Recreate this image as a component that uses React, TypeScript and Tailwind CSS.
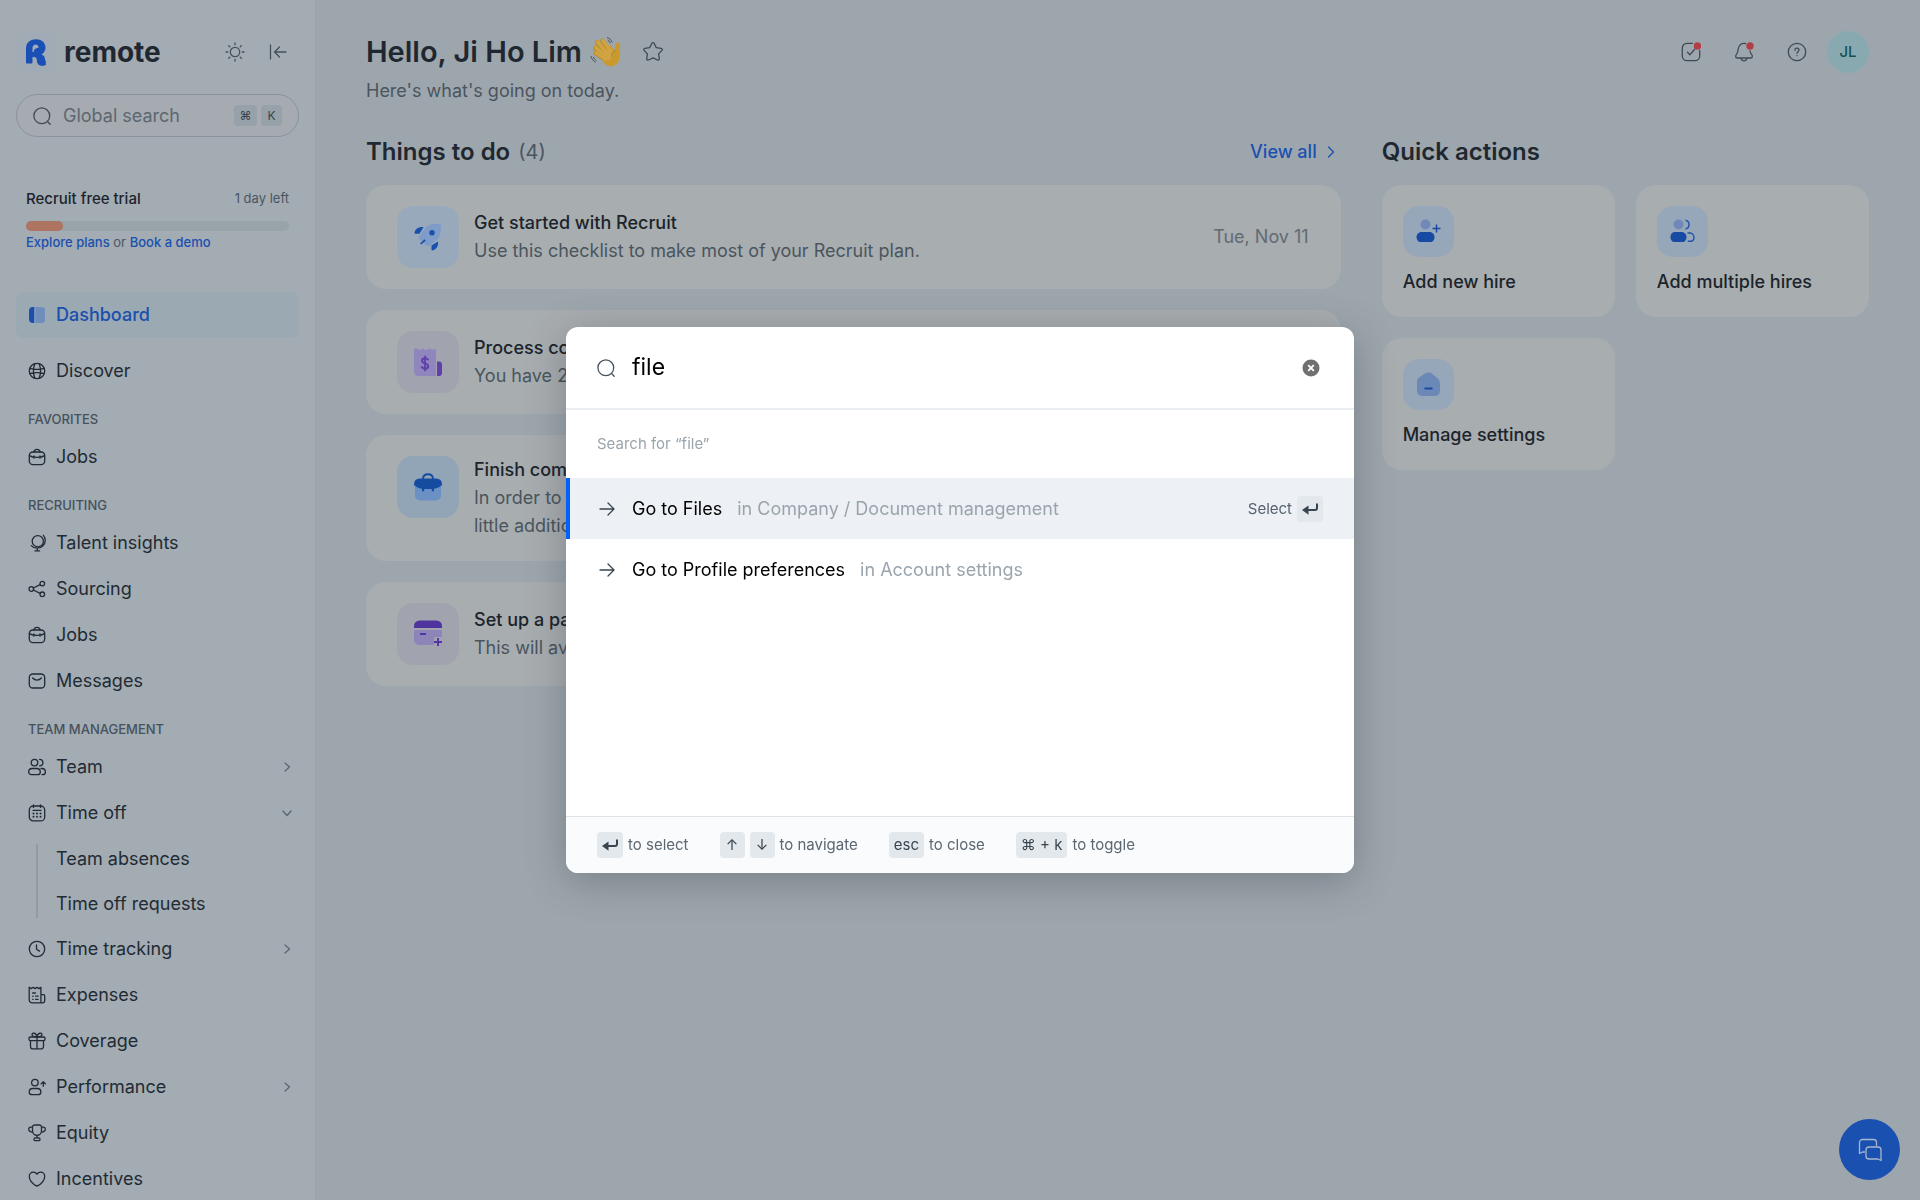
import React, { useState } from 'react';

type IconProps = { children: React.ReactNode; className?: string; box?: string };

const Icon = ({ children, className = 'size-[18px]', box = '0 0 18 18' }: IconProps) => (
  <svg
    viewBox={box}
    className={`shrink-0 ${className}`}
    fill="none"
    stroke="currentColor"
    strokeWidth="1.3"
    strokeLinecap="round"
    strokeLinejoin="round"
    aria-hidden="true"
  >
    {children}
  </svg>
);

const icons = {
  dashboard: (
    <>
      <path d="M6.3 1v16H5a4 4 0 0 1-4-4V5a4 4 0 0 1 4-4z" fill="currentColor" stroke="none" />
      <path d="M7.3 1H14a3 3 0 0 1 3 3v10a3 3 0 0 1-3 3H7.3z" fill="#6f8ebb" stroke="none" />
    </>
  ),
  globe: (
    <>
      <circle cx="9" cy="9" r="7.7" />
      <path d="M6.8 1.8C5.2 6 5.2 12 6.8 16.2M11.2 1.8c1.6 4.2 1.6 10.2 0 14.4M1.8 6.3c4 1.2 10.4 1.2 14.4 0M1.8 11.7c4-1.2 10.4-1.2 14.4 0" />
    </>
  ),
  bag: (
    <>
      <rect x="1.3" y="4" width="15.4" height="12.7" rx="3.6" />
      <path d="M5.8 4C6.2 2.4 7.4 1.3 9 1.3s2.8 1.1 3.2 2.7M1.5 7.6c2 1.4 4.2 1.8 7.5 1.8s5.5-.4 7.5-1.8M6 8v2.2M12 8v2.2" />
    </>
  ),
  insights: (
    <>
      <circle cx="9.8" cy="7.2" r="5.6" />
      <path d="M3.2 11.6c3.200 3.400 8.600 3.500 11.800.1 2.900-3 2.900-7.500.4-10.400M9.300 14.400v2.300M7 16.900h4.600" />
    </>
  ),
  share: (
    <>
      <circle cx="3.3" cy="9" r="2.3" />
      <circle cx="14.3" cy="3.6" r="2.3" />
      <circle cx="14.3" cy="14.3" r="2.3" />
      <path d="M5.4 8l6.7-3.3M5.4 10l6.7 3.3" />
    </>
  ),
  mail: (
    <>
      <rect x="1.3" y="2" width="15.4" height="14" rx="3.6" />
      <path d="M4.6 6c2.5 2.7 6.3 2.7 8.8 0" />
    </>
  ),
  team: (
    <>
      <circle cx="6.5" cy="4.6" r="3.3" />
      <path d="M11.6 1.3a3.3 3.3 0 0 1 0 6.6" />
      <path d="M.7 13.9a3.5 3.5 0 0 1 3.5-3.4h4.6a3.5 3.5 0 0 1 3.5 3.400c0 1.500-1.100 2.700-2.700 2.700H3.400C1.800 16.600.7 15.400.7 13.900zM13 10.500h.9a3.500 3.500 0 0 1 3.500 3.400c0 1.500-1.100 2.700-2.700 2.700h-.8" />
    </>
  ),
  calendar: (
    <>
      <rect x="1.3" y="2" width="15.4" height="14.9" rx="4" />
      <path d="M5.5.9v2.500M12.500.9v2.500M5 6.300h8" />
      <path d="M5.500 9.600h.01M9 9.600h.01M12.500 9.600h.01M5.500 12.800h.01M9 12.800h.01M12.500 12.800h.01" strokeWidth="2" />
    </>
  ),
  clock: (
    <>
      <circle cx="9" cy="9" r="7.7" />
      <path d="M8.5 4.800v4.400l3 1.900" />
    </>
  ),
  receipt: (
    <>
      <path d="M12.9 8.200V1.300L11 2.600 9 1.300 7.100 2.600 5.200 1.300 3.300 2.600 1.200 1.300v12.500a3 3 0 0 0 3 3h10.300a2.200 2.200 0 0 0 2.200-2.200V10a1.300 1.300 0 0 0-1.300-1.300h-1.300a1.200 1.200 0 0 0-1.200 1.200v6.900" />
      <path d="M4.700 7h2.700M4.700 10.200h.5M7.600 10.200h2.500M4.700 13.300h.5M7.600 13.300h2.500" />
    </>
  ),
  gift: (
    <>
      <rect x="1" y="5" width="16" height="3.6" rx="1.3" />
      <path d="M2.500 8.600v5.800a2.500 2.500 0 0 0 2.500 2.500h8a2.500 2.500 0 0 0 2.500-2.500V8.600M9 5v11.900M9 5C5.400 5 4 3.800 4 2.600 4 .5 8.400.3 9 5zM9 5c3.600 0 5-1.200 5-2.400C14 .5 9.600.3 9 5z" />
    </>
  ),
  performance: (
    <>
      <circle cx="6.9" cy="4.6" r="3.3" />
      <path d="M1.200 13.900a3.500 3.500 0 0 1 3.500-3.400h4.700a3.500 3.500 0 0 1 3.500 3.400c0 1.500-1.100 2.700-2.700 2.700H3.900c-1.600 0-2.700-1.200-2.700-2.700zM15.300 8.300V4M13.100 5.900l2.200-2.100 2.200 2.100" />
    </>
  ),
  trophy: (
    <>
      <path d="M4.500 2.900a2 2 0 0 1 2-1.900h5a2 2 0 0 1 2 1.900v3.900a4.500 4.500 0 0 1-9 0zM4.500 3.100H2.700C1.500 3.100.7 4 .7 5.200c0 1.900 1.800 3 4 2.900M13.500 3.100h1.800c1.200 0 2 .9 2 2.100 0 1.900-1.800 3-4 2.900M9 11.300v2.600" />
      <rect x="6" y="13.9" width="6" height="2.8" rx="1.3" />
    </>
  ),
  heart: (
    <path d="M9 16.200C4.900 14.200 1.300 10.700 1.300 6.600 1.300 4.100 3 2.200 5.300 2.200c1.500 0 2.900.8 3.700 2 .8-1.200 2.200-2 3.700-2 2.300 0 4 1.900 4 4.400 0 4.100-3.600 7.600-7.700 9.600z" />
  ),
  search: (
    <>
      <circle cx="8.800" cy="8.800" r="7.900" />
      <path d="M14.500 14.500l2.700 2.700" />
    </>
  ),
};

const ArrowRight = () => (
  <Icon>
    <path d="M2 9h13.500M10 3l6 6-6 6" />
  </Icon>
);

const EnterKey = () => (
  <svg viewBox="0 0 18 18" className="size-[18px]" fill="none" stroke="currentColor" strokeWidth="2" aria-hidden="true">
    <path d="M16 3.500v4.600a2 2 0 0 1-2 2H6" />
    <path d="M7.500 5.500v9.200L1 10.100z" fill="currentColor" stroke="none" />
  </svg>
);

const Wave = () => (
  <svg viewBox="0 0 32 32" className="size-8 shrink-0" fill="none" role="img" aria-label="Waving hand">
    <g stroke="#b98d22" strokeLinecap="round">
      <path d="M16.500 21.500 5.500 12" strokeWidth="4.600" />
      <path d="M17 18 7 6.500" strokeWidth="4.600" />
      <path d="M20 16 12.500 4.800" strokeWidth="4.600" />
      <path d="M14 23 5.500 17" strokeWidth="4.200" />
    </g>
    <path
      d="M11 21l9-12c2 2.500 3.800 4.300 5 5.500.6-2.500.3-4.500.8-6.300.5-1.700 3-2 3.900-.2.600 1.200.2 3.500.3 7 .1 5.500-.3 10.200-3.800 13.200-4 3.300-8.300 2.500-11.700-.6z"
      fill="#c99a2b"
    />
    <g stroke="#d0a443" strokeLinecap="round">
      <path d="M17 21 6 11.800" strokeWidth="3.500" />
      <path d="M18 18 7.500 6.200" strokeWidth="3.500" />
      <path d="M21 16 13 4.800" strokeWidth="3.500" />
      <path d="M15 23 6 16.800" strokeWidth="3.200" />
    </g>
    <path d="M13 20l8-8c2 2 4 4.500 3 7s-4 6-7 6z" fill="#d0a443" />
    <path d="M25 14.700c-2.300 1.300-3.400 3.500-2.900 6" stroke="#a77a1c" strokeLinecap="round" />
    <path d="M17.500 1.500c2 .8 3.600 2.300 4.500 4.500M18 4.300c1 .5 1.800 1.300 2.300 2.400M1 20.500c.7 2.500 2.200 4.400 4.500 5.600M3.500 21.300c.5 1.200 1.300 2.200 2.500 2.900" stroke="#48525b" strokeLinecap="round" />
  </svg>
);

type NavEntry = { label: string; icon: React.ReactNode; open?: boolean; closed?: boolean };

const NavRow = ({ label, icon, open, closed }: NavEntry) => (
  <a href="#" className="flex h-[46px] items-center pr-1.5 pl-3 text-lg">
    <Icon>{icon}</Icon>
    <span className="ml-2.5 flex-1">{label}</span>
    {closed && (
      <Icon className="size-3 text-[#5b666f]" box="0 0 12 12">
        <path d="M4 2l4.500 4L4 10" />
      </Icon>
    )}
    {open && (
      <Icon className="size-3 text-[#5b666f]" box="0 0 12 12">
        <path d="M2 4l4 4.500L10 4" />
      </Icon>
    )}
  </a>
);

const NavHeading = ({ children }: { children: React.ReactNode }) => (
  <h3 className="flex h-10 items-center px-3 pt-3 text-[13px] font-medium tracking-normal text-[#46525c] uppercase">{children}</h3>
);

const recruiting: NavEntry[] = [
  { label: 'Talent insights', icon: icons.insights },
  { label: 'Sourcing', icon: icons.share },
  { label: 'Jobs', icon: icons.bag },
  { label: 'Messages', icon: icons.mail },
];

const management: NavEntry[] = [
  { label: 'Time tracking', icon: icons.clock, closed: true },
  { label: 'Expenses', icon: icons.receipt },
  { label: 'Coverage', icon: icons.gift },
  { label: 'Performance', icon: icons.performance, closed: true },
  { label: 'Equity', icon: icons.trophy },
  { label: 'Incentives', icon: icons.heart },
];

const Sidebar = () => (
  <aside className="h-full w-[316px] shrink-0 overflow-hidden border-r border-[#9ba3ab] bg-[#a3abb3] px-4 pt-8">
    <div className="flex h-10 items-center">
      <div className="flex size-10 items-center justify-center rounded-xl bg-[#a0abb5]">
        <svg viewBox="0 0 20 27" className="h-[27px] w-5" fill="#1a50b5" role="img" aria-label="Remote logo">
          <path d="M0 23V9.500C0 3.800 4 .3 9.800.3c5.700 0 9.700 3.400 9.700 8.200 0 3.100-1.500 5.500-4.100 6.900 2.500.8 3.600 2.400 3.600 4.900 0 .9.2 1.200.8 1.200V26c-.7.5-2 .8-3.300.8-3.500 0-5.600-2-5.600-5.300 0-2.300-1-3.600-2.900-3.600H6.500v5.300c0 .9-.3 1.300-1.200 1.300H1.200C.3 24.500 0 24 0 23zM6.500 12.900h1.200c.1-2.400 1.600-3.900 4.800-4.100V8c-.2-1.700-1.200-2.600-2.800-2.600-2 0-3.200 1.300-3.200 3.700z" />
        </svg>
      </div>
      <span className="ml-2 flex-1 text-[28px] leading-10 font-bold text-[#1f2830]">remote</span>
      <button type="button" aria-label="Toggle theme" className="mr-6 text-[#46515a]">
        <Icon className="size-5" box="0 0 20 20">
          <circle cx="10" cy="10" r="4.7" />
          <path d="M10 1v1.700M10 17.300V19M1 10h1.700M17.300 10H19M3.700 3.700l1.100 1.100M15.200 15.200l1.100 1.100M3.700 16.300l1.100-1.100M15.200 4.800l1.100-1.100" />
        </Icon>
      </button>
      <button type="button" aria-label="Collapse sidebar" className="mr-3 text-[#46515a]">
        <Icon>
          <path d="M1.500 2v14M6 9h11M10.500 4l-5 5 5 5" />
        </Icon>
      </button>
    </div>

    <label className="mt-[22px] flex h-[43px] items-center rounded-full border border-[#8a939c] bg-[#a5abb0] px-4">
      <span className="text-[#3f4a53]">
        <Icon>{icons.search}</Icon>
      </span>
      <input
        type="text"
        aria-label="Global search"
        placeholder="Global search"
        className="ml-3 w-0 flex-1 bg-transparent text-lg outline-none placeholder:text-[#5c6770]"
      />
      <kbd className="flex h-[21px] w-[23px] items-center justify-center rounded-sm bg-[#97a1a9] font-['Inter',sans-serif] text-xs text-[#38434c]">⌘</kbd>
      <kbd className="ml-1 flex h-[21px] w-[21px] items-center justify-center rounded-sm bg-[#97a1a9] font-['Inter',sans-serif] text-xs text-[#38434c]">K</kbd>
    </label>

    <section className="mt-[52px] h-[103px] px-2.5">
      <div className="flex h-5 items-center justify-between">
        <h2 className="text-[15px] font-medium text-[#1c242b]">Recruit free trial</h2>
        <span className="text-[13px] text-[#4b5660]">1 day left</span>
      </div>
      <div className="mt-3 h-2.5 rounded-full bg-[#98a3aa]">
        <div className="h-full w-[14%] rounded-full bg-[#ad7462]" />
      </div>
      <p className="mt-px text-[13px] leading-5 text-[#4b5660]">
        <a href="#" className="font-medium text-[#1a50b0]">Explore plans</a> or{' '}
        <a href="#" className="font-medium text-[#1a50b0]">Book a demo</a>
      </p>
    </section>

    <nav className="text-[#222b33]">
      <div className="mb-2.5 rounded-lg bg-[#9ba9b3] font-medium text-[#1a4fae]">
        <NavRow label="Dashboard" icon={icons.dashboard} />
      </div>
      <NavRow label="Discover" icon={icons.globe} />
      <NavHeading>Favorites</NavHeading>
      <NavRow label="Jobs" icon={icons.bag} />
      <NavHeading>Recruiting</NavHeading>
      {recruiting.map((item) => (
        <NavRow key={item.label} {...item} />
      ))}
      <NavHeading>Team management</NavHeading>
      <NavRow label="Team" icon={icons.team} closed />
      <NavRow label="Time off" icon={icons.calendar} open />
      <div className="flex">
        <div className="my-2 ml-5 w-[2px] bg-[#929aa2]" />
        <div className="ml-[18px] flex-1 text-lg">
          <a href="#" className="flex h-[45px] items-center">Team absences</a>
          <a href="#" className="flex h-[45px] items-center">Time off requests</a>
        </div>
      </div>
      {management.map((item) => (
        <NavRow key={item.label} {...item} />
      ))}
    </nav>
  </aside>
);

const rocket = (
  <>
    <path d="M12.500 4C14.500 2 17 1.200 20 1l5.500-.2c1.300 0 1.700.5 1.600 1.700L26.500 9c-.3 3-1.200 5.400-3.200 7.400l-6.700 5.600c-1.300 1.200-3 1.300-4.300.2l-6.500-5.400c-1.200-1.300-1.200-2.900-.1-4.300z" fill="#7f9bc7" />
    <path d="M9.500 4.200c-5-.7-8.200 2-9 5.400-.1.700.2 1.100.9 1.100h4.100zM24 18.500c.7 5-2 8.200-5.400 9-.7.1-1.100-.2-1.100-.9v-4zM6 20.500l4.500-4.200 1.300 1.200L7.300 21.600z" fill="#1a50ae" />
    <circle cx="18" cy="9.800" r="2.700" fill="#1a50ae" />
  </>
);

const invoice = (
  <>
    <path d="M0 1.500 1.500 0l3.800 2L9 .5 11.500 2l4-1.500L19 2l3-1.500v28H5a5 5 0 0 1-5-5z" fill="#8f86bd" />
    <path d="M25 13.500c2 0 3 1.500 3 3V25c0 2.500-2 3.500-5 3.500V13.500z" fill="#5e3fac" />
    <path d="M14 11.500c-.8-1-1.800-1.300-3-1.300-1.700 0-3 .9-3 2.500 0 3.400 6.300 1.800 6.300 5.200 0 1.700-1.400 2.700-3.200 2.700-1.400 0-2.500-.5-3.300-1.500M11.100 8.500v14" fill="none" stroke="#5e3fac" strokeWidth="1.900" strokeLinecap="round" />
  </>
);

const briefcase = (
  <>
    <path d="M1 11h26v11.500a5 5 0 0 1-5 5H6a5 5 0 0 1-5-5z" fill="#6b90c4" />
    <path d="M0 11a5.500 5.500 0 0 1 5.500-5.500h17A5.500 5.500 0 0 1 28 11v1c-1.800 2-5 3.200-8 3.700v2.600h-2.200v-2.300h-7.600v2.300H8v-2.600c-3-.5-6.200-1.700-8-3.700z" fill="#164c9f" />
    <path d="M9 6c0-3 2-4.700 5-4.700s5 1.700 5 4.700" fill="none" stroke="#164c9f" strokeWidth="1.900" />
  </>
);

const card = (
  <>
    <path d="M0 10h28v7h-8v8H5a5 5 0 0 1-5-5z" fill="#8d85b7" />
    <path d="M0 8V6a5.500 5.500 0 0 1 5.500-5.500h17A5.500 5.500 0 0 1 28 6v2z" fill="#4f34a0" />
    <path d="M6 14h6M24 18v8M20 22h8" fill="none" stroke="#5235a4" strokeWidth="1.900" />
  </>
);

type Task = { title: string; text: string; more?: string; date?: string; tile: string; art: React.ReactNode };

const tasks: Task[] = [
  { title: 'Get started with Recruit', text: 'Use this checklist to make most of your Recruit plan.', date: 'Tue, Nov 11', tile: 'bg-[#98a9bb]', art: rocket },
  { title: 'Process co', text: 'You have 2', tile: 'bg-[#a1a4ae]', art: invoice },
  { title: 'Finish com', text: 'In order to', more: 'little additio', tile: 'bg-[#92a5b6]', art: briefcase },
  { title: 'Set up a pa', text: 'This will ave', tile: 'bg-[#a1a4ae]', art: card },
];

const TaskCard = ({ title, text, more, date, tile, art }: Task) => (
  <li className={`flex rounded-[20px] bg-[#a8adb0] py-[21px] pr-8 pl-[31px] ${more ? 'items-start' : 'items-center'}`}>
    <div className={`flex size-[62px] shrink-0 items-center justify-center rounded-2xl ${tile}`}>
      <svg viewBox="0 0 28 28" className="size-7" aria-hidden="true">{art}</svg>
    </div>
    <div className="ml-[15px] flex-1 text-lg leading-7">
      <h3 className="font-medium text-[#1c242b]">{title}</h3>
      <p className="text-[#4a555e]">{text}</p>
      {more && <p className="text-[#4a555e]">{more}</p>}
    </div>
    {date && <time className="text-lg text-[#616b73]">{date}</time>}
  </li>
);

const quickActions = [
  {
    label: 'Add new hire',
    art: (
      <>
        <circle cx="9.5" cy="5.5" r="5" fill="#7089b8" />
        <path d="M5.500 13h8c3 0 5 2.300 5 5.200 0 2.600-1.700 4.800-4 4.800h-10c-2.300 0-4-2.200-4-4.800C.5 15.300 2.500 13 5.500 13z" fill="#164aa3" />
        <path d="M20.500 5.500v8M16.500 9.500h8" stroke="#164aa3" strokeWidth="1.500" />
      </>
    ),
  },
  {
    label: 'Add multiple hires',
    art: (
      <>
        <circle cx="8.5" cy="5.5" r="5" fill="#7089b8" />
        <path d="M5 13h6.500c3 0 5 2.300 5 5.200 0 2.600-1.500 4.800-3.700 4.800H4.200C2 23 .5 20.800.5 18.200.5 15.300 2 13 5 13z" fill="#164aa3" />
        <path d="M15.500 1.200a4.500 4.500 0 0 1 0 8.800M17.500 14h2c2.500 0 4.500 1.800 4.500 4.300 0 2.300-1.500 4-3.500 4h-2.800" fill="none" stroke="#2256ac" strokeWidth="1.500" />
      </>
    ),
  },
  {
    label: 'Manage settings',
    art: (
      <>
        <path d="M9.600 1.300c1.700-1.200 4.100-1.200 5.800 0l5 4C22.700 7 24 9 24 12v7a5 5 0 0 1-5 5H6a5 5 0 0 1-5-5V9.500c0-2 .7-3 2-4z" fill="#6b88b6" />
        <path d="M8.500 16.500h8" stroke="#164aa3" strokeWidth="2" />
      </>
    ),
  },
];

const HeaderIcons = () => (
  <div className="flex items-center text-[#3f4a53]">
    <button type="button" aria-label="Tasks">
      <Icon className="size-5" box="0 0 20 20">
        <path d="M11.500 1.300H6a4.700 4.700 0 0 0-4.700 4.700v8A4.700 4.700 0 0 0 6 18.700h8a4.700 4.700 0 0 0 4.700-4.700V8.500M6.500 10.300l2.400 2.400 4.800-5.400" />
        <circle cx="16.500" cy="4" r="3.700" fill="#b23e45" stroke="none" />
      </Icon>
    </button>
    <button type="button" aria-label="Notifications" className="ml-[33px]">
      <Icon className="size-5" box="0 0 20 20">
        <path d="M11.500 1.500C7.300.6 4.300 3.500 4.200 7.300c-.1 3-.9 4.200-1.900 5.400-1.200 1.500-.6 3.300 1.200 3.300h13c1.800 0 2.400-1.800 1.200-3.300-.8-1-1.500-1.900-1.700-3.700M7 16.300c.8 3.300 5.200 3.300 6 0" />
        <circle cx="16" cy="4" r="3.700" fill="#b23e45" stroke="none" />
      </Icon>
    </button>
    <button type="button" aria-label="Help" className="ml-[33px]">
      <Icon className="size-5" box="0 0 20 20">
        <circle cx="10" cy="10" r="8.7" />
        <path d="M8 8.200c0-1.300.9-2 2-2s2 .8 2 1.900c0 1.500-2 1.600-2 3.100M10 13.600v.1" />
      </Icon>
    </button>
    <button type="button" className="ml-5 size-[42px] rounded-full bg-[#88a9b0] text-[15px] font-medium text-[#14505a]">JL</button>
  </div>
);

const Kbd = ({ children, className }: { children: React.ReactNode; className: string }) => (
  <kbd className={`flex h-[26px] items-center justify-center rounded-sm bg-[#e3e8ed] font-['Inter',sans-serif] text-[15px] text-[#38444e] ${className}`}>
    {children}
  </kbd>
);

const results = [
  { title: 'Go to Files', place: 'in Company / Document management' },
  { title: 'Go to Profile preferences', place: 'in Account settings' },
];

const SearchDialog = () => {
  const [query, setQuery] = useState('file');
  const [active, setActive] = useState(0);

  return (
    <div className="fixed inset-0 flex items-center justify-center">
      <div
        role="dialog"
        aria-label="Search"
        className="w-[788px] max-w-full overflow-hidden rounded-xl bg-white shadow-[0_8px_40px_rgba(30,38,46,0.3)]"
      >
        <div className="flex h-[83px] items-center border-b-2 border-[#eaeef2] px-[31px]">
          <span className="text-[#45515b]">
            <Icon>{icons.search}</Icon>
          </span>
          <input
            type="text"
            aria-label="Search"
            value={query}
            onChange={(e) => setQuery(e.target.value)}
            className="ml-[17px] flex-1 text-[23px] text-black outline-none"
          />
          <button type="button" aria-label="Clear search" onClick={() => setQuery('')}>
            <svg viewBox="0 0 24 24" className="size-6" aria-hidden="true">
              <circle cx="12" cy="12" r="8.500" fill="#6f7071" />
              <path d="m9.200 9.200 5.600 5.600M14.800 9.200l-5.600 5.600" stroke="#fff" strokeWidth="1.800" />
            </svg>
          </button>
        </div>

        <div className="min-h-[406px]">
          <p className="flex h-[68px] items-center px-[31px] text-[15px] text-[#9aa4ad]">Search for “{query}”</p>
          <ul>
            {results.map((r, i) => (
              <li key={r.title}>
                <button
                  type="button"
                  onMouseEnter={() => setActive(i)}
                  className={`flex h-[61px] w-full items-center border-l-4 pr-[31px] pl-7 text-left text-lg ${
                    i === active ? 'border-[#0061ff] bg-[#edf1f5]' : 'border-transparent'
                  }`}
                >
                  <span className="text-[#38444e]">
                    <ArrowRight />
                  </span>
                  <span className="ml-4 text-black">{r.title}</span>
                  <span className="ml-[15px] flex-1 text-[#9aa4ad]">{r.place}</span>
                  {i === active && (
                    <span className="flex items-center gap-[5px] text-[15px] text-[#56626d]">
                      Select
                      <Kbd className="w-[26px]">
                        <EnterKey />
                      </Kbd>
                    </span>
                  )}
                </button>
              </li>
            ))}
          </ul>
        </div>

        <footer className="flex h-[57px] items-center gap-[31px] border-t border-[#dde2e7] bg-[#f9fbfc] px-[31px] text-[15px] text-[#5b6772]">
          <span className="flex items-center gap-[5px]">
            <Kbd className="w-[26px]">
              <EnterKey />
            </Kbd>
            to select
          </span>
          <span className="flex items-center gap-[5px]">
            <Kbd className="w-[25px]">↑</Kbd>
            <Kbd className="w-[25px]">↓</Kbd>
            to navigate
          </span>
          <span className="flex items-center gap-[5px]">
            <Kbd className="px-[5px]">esc</Kbd>
            to close
          </span>
          <span className="flex items-center gap-[5px]">
            <Kbd className="px-[5px]">⌘ + k</Kbd>
            to toggle
          </span>
        </footer>
      </div>
    </div>
  );
};

const App = () => {
  return (
    <div className="flex h-screen overflow-hidden bg-[#9ea6ad] font-['Inter',sans-serif] text-[#1f272e]">
      <Sidebar />

      <main className="min-w-0 flex-1 pt-[31px] pr-[51px] pl-[50px]">
        <header className="flex items-start justify-between">
          <div>
            <div className="flex h-[42px] items-center">
              <h1 className="flex items-center gap-2 text-[29px] leading-10 font-semibold text-[#1f2830]">
                Hello, Ji Ho Lim <Wave />
              </h1>
              <button type="button" aria-label="Add to favorites" className="ml-5 text-[#3f4a53]">
                <Icon className="size-[22px]" box="0 0 22 22">
                  <path d="M9.900 2.300c.5-.9 1.700-.9 2.200 0l2.200 4.300 4.900.8c1 .2 1.400 1.300.7 2l-3.300 3.500.7 4.800c.1 1-.9 1.700-1.800 1.300L11 16.900 6.500 19c-.9.4-1.900-.3-1.800-1.300l.7-4.800L2.100 9.400c-.7-.7-.3-1.800.7-2l4.900-.8z" />
                </Icon>
              </button>
            </div>
            <p className="mt-1 text-lg leading-7 text-[#4a555e]">Here's what's going on today.</p>
          </div>
          <HeaderIcons />
        </header>

        <div className="mt-[29px] flex items-start gap-[41px]">
          <section className="min-w-0 flex-2">
            <div className="flex h-9 items-center">
              <h2 className="text-2xl font-semibold text-[#1f2830]">Things to do</h2>
              <span className="ml-2 text-xl text-[#4a555e]">(4)</span>
              <a href="#" className="mr-0.5 ml-auto flex items-center gap-1.5 text-lg font-medium text-[#1a50b0]">
                View all
                <Icon className="size-4" box="0 0 16 16">
                  <path d="M5.500 3l5 5-5 5" />
                </Icon>
              </a>
            </div>
            <ul className="mt-[15px] space-y-[21px]">
              {tasks.map((task) => (
                <TaskCard key={task.title} {...task} />
              ))}
            </ul>
          </section>

          <section className="min-w-0 flex-1">
            <h2 className="flex h-9 items-center text-2xl font-semibold text-[#1f2830]">Quick actions</h2>
            <div className="mt-[15px] grid grid-cols-2 gap-[21px]">
              {quickActions.map((action) => (
                <a key={action.label} href="#" className="rounded-[20px] bg-[#a8adb0] p-[21px]">
                  <div className="flex size-[51px] items-center justify-center rounded-2xl bg-[#96a7b9]">
                    <svg viewBox="0 0 25 25" className="size-[25px]" fill="none" aria-hidden="true">{action.art}</svg>
                  </div>
                  <p className="mt-[11px] text-lg leading-7 font-medium text-[#1c242b]">{action.label}</p>
                </a>
              ))}
            </div>
          </section>
        </div>
      </main>

      <button
        type="button"
        aria-label="Open chat"
        className="fixed right-5 bottom-5 flex size-[61px] items-center justify-center rounded-full bg-[#1a50b0] text-[#a8b6cf]"
      >
        <Icon className="size-6" box="0 0 24 24">
          <path d="M1.500 15.500V4.500a3 3 0 0 1 3-3h11a3 3 0 0 1 3 3v3M1.500 15.500l3-1.500h2" />
          <path d="M11 9h9a3 3 0 0 1 3 3v10.500L20 21h-9a3 3 0 0 1-3-3v-6a3 3 0 0 1 3-3z" />
        </Icon>
      </button>

      <SearchDialog />
    </div>
  );
};

export default App;
